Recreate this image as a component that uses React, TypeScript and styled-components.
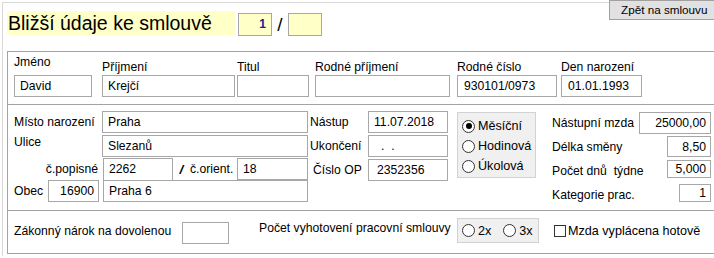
import React from 'react';
import styled, { createGlobalStyle, css } from 'styled-components';

const Global = createGlobalStyle`
  html, body { margin: 0; padding: 0; background: #fff; overflow: hidden; }
  body { font-family: "Liberation Sans", Arial, sans-serif; font-size: 12.2px; color: #000; }
`;

const Frame = styled.div`
  position: relative;
  box-sizing: border-box;
  margin: 2px 0 0 2px;
  height: 254px;
  border-top: 1px solid #d8d8d8;
  border-left: 1px solid #d8d8d8;
`;

const BackButton = styled.button`
  position: absolute;
  top: -3px;
  right: -1px;
  box-sizing: border-box;
  width: 106px;
  height: 20px;
  margin: 0;
  padding: 0 0 1px 11px;
  border: 1px solid #a0a0a0;
  background: #e1e1e1;
  font-family: "Liberation Sans", Arial, sans-serif;
  font-size: 11.7px;
  color: #000;
  text-align: left;
  cursor: pointer;
`;

const Header = styled.div`
  display: flex;
  align-items: flex-start;
  padding: 8px 0 0 4px;
`;

const Title = styled.div`
  box-sizing: border-box;
  width: 228px;
  height: 24px;
  line-height: 24px;
  padding-left: 1px;
  background: #ffffc8;
  font-size: 19.5px;
  white-space: nowrap;
`;

const NumBox = styled.div<{ $ml: number }>`
  box-sizing: border-box;
  margin: 2px 0 0 ${p => p.$ml}px;
  width: 34px;
  height: 23px;
  border: 1px solid #a7a7a7;
  background: #ffffc8;
  text-align: right;
  padding-right: 5px;
  line-height: 21px;
  font-size: 12px;
  font-weight: bold;
  color: #1a1a96;
`;

const HeaderSlash = styled.div`
  margin-top: 2px;
  width: 16px;
  height: 23px;
  line-height: 23px;
  text-align: center;
  font-size: 19px;
`;

const Sections = styled.div`
  margin: 15px 0 0 4px;
  width: 720px;
  border: 1px solid #a3a3a3;
  border-right: none;
`;

const Section = styled.div<{ $h: number }>`
  box-sizing: border-box;
  height: ${p => p.$h}px;
  display: flex;
  padding-left: 6px;
`;

const TopSection = styled(Section)`
  align-items: flex-end;
  padding-top: 3px;
  padding-bottom: 7px;
  border-bottom: 1px solid #a3a3a3;
`;

const MidSection = styled(Section)`
  align-items: flex-start;
  padding-top: 6px;
  border-bottom: 1px solid #a3a3a3;
`;

const BottomSection = styled(Section)`
  align-items: flex-start;
`;

const Field = styled.div<{ $w: number; $ml: number }>`
  display: flex;
  flex-direction: column;
  width: ${p => p.$w}px;
  margin-left: ${p => p.$ml}px;
  flex: none;
`;

const FieldLabel = styled.div<{ $mb?: number }>`
  line-height: 15px;
  margin-bottom: ${p => p.$mb ?? 0}px;
  white-space: nowrap;
`;

const Input = styled.input<{
  $w?: number;
  $h?: number;
  $align?: string;
  $pl?: number;
  $ml?: number;
  $mt?: number;
}>`
  box-sizing: border-box;
  width: ${p => (p.$w ? `${p.$w}px` : '100%')};
  height: ${p => p.$h ?? 22}px;
  flex: none;
  margin: ${p => p.$mt ?? 0}px 0 0 ${p => p.$ml ?? 0}px;
  padding: 0 4px 0 ${p => p.$pl ?? 5}px;
  border: 1px solid #a7a7a7;
  border-radius: 0;
  background: #fff;
  font-family: "Liberation Sans", Arial, sans-serif;
  font-size: 12.2px;
  color: #000;
  text-align: ${p => p.$align ?? 'left'};
  outline: none;
`;

const Column = styled.div<{ $w: number; $ml: number; $mt?: number }>`
  display: flex;
  flex-direction: column;
  flex: none;
  width: ${p => p.$w}px;
  margin-left: ${p => p.$ml}px;
  margin-top: ${p => p.$mt ?? 0}px;
`;

const Row = styled.div<{ $mt: number }>`
  display: flex;
  align-items: center;
  height: 22px;
  margin-top: ${p => p.$mt}px;
`;

const RowLabel = styled.div<{ $w?: number; $top?: boolean; $right?: boolean; $pl?: number }>`
  box-sizing: border-box;
  flex: ${p => (p.$w ? 'none' : '1')};
  width: ${p => (p.$w ? `${p.$w}px` : 'auto')};
  line-height: 15px;
  white-space: nowrap;
  padding-left: ${p => p.$pl ?? 0}px;
  ${p => p.$top && css`align-self: flex-start;`}
  ${p => p.$right && css`text-align: right; padding-right: 5px;`}
`;

const RightRow = styled(Row)`
  align-items: flex-start;
  & > ${RowLabel} { align-self: center; }
`;

const Sep = styled.div`
  flex: none;
  width: 17px;
  text-align: center;
  font-weight: bold;
  font-style: italic;
  font-size: 13.5px;
  line-height: 15px;
`;

const RadioPanel = styled.div<{ $w: number; $h: number; $mt: number; $ml: number; $row?: boolean }>`
  box-sizing: border-box;
  flex: none;
  display: flex;
  flex-direction: ${p => (p.$row ? 'row' : 'column')};
  align-items: ${p => (p.$row ? 'center' : 'stretch')};
  width: ${p => p.$w}px;
  height: ${p => p.$h}px;
  margin: ${p => p.$mt}px 0 0 ${p => p.$ml}px;
  padding: ${p => (p.$row ? '0 0 0 4px' : '3px 0 0 4px')};
  background: #f0f0f0;
  border: 1px solid #d2d2d2;
`;

const RadioItem = styled.label<{ $gap?: number }>`
  display: flex;
  align-items: center;
  gap: 3px;
  height: 20px;
  margin-right: ${p => p.$gap ?? 0}px;
  font-size: 12.6px;
  white-space: nowrap;
`;

const RadioCircle = styled.span<{ $on?: boolean }>`
  position: relative;
  box-sizing: border-box;
  flex: none;
  width: 13px;
  height: 13px;
  border: 1px solid #333;
  border-radius: 50%;
  background: #fff;
  ${p =>
    p.$on &&
    css`
      &::after {
        content: '';
        position: absolute;
        inset: 0;
        margin: auto;
        width: 6px;
        height: 6px;
        border-radius: 50%;
        background: #000;
      }
    `}
`;

const Text = styled.div<{ $w?: number; $mt: number; $ml?: number }>`
  flex: none;
  width: ${p => (p.$w ? `${p.$w}px` : 'auto')};
  margin: ${p => p.$mt}px 0 0 ${p => p.$ml ?? 0}px;
  line-height: 15px;
  white-space: nowrap;
`;

const CheckGroup = styled.label<{ $mt: number; $ml: number }>`
  display: flex;
  align-items: center;
  gap: 2px;
  height: 15px;
  margin: ${p => p.$mt}px 0 0 ${p => p.$ml}px;
  white-space: nowrap;
  font-size: 12.6px;
`;

const CheckBox = styled.span`
  box-sizing: border-box;
  flex: none;
  width: 12px;
  height: 12px;
  border: 1px solid #333;
  background: #fff;
`;

export default function App() {
  return (
    <>
      <Global />
      <Frame>
        <BackButton>Zpět na smlouvu</BackButton>
        <Header>
          <Title>Bližší údaje ke smlouvě</Title>
          <NumBox $ml={3}>1</NumBox>
          <HeaderSlash>/</HeaderSlash>
          <NumBox $ml={0} />
        </Header>
        <Sections>
          <TopSection $h={53}>
            <Field $w={78} $ml={0}>
              <FieldLabel $mb={5}>Jméno</FieldLabel>
              <Input readOnly defaultValue="David" />
            </Field>
            <Field $w={133} $ml={10}>
              <FieldLabel>Příjmení</FieldLabel>
              <Input readOnly defaultValue="Krejčí" />
            </Field>
            <Field $w={72} $ml={2}>
              <FieldLabel>Titul</FieldLabel>
              <Input readOnly defaultValue="" />
            </Field>
            <Field $w={135} $ml={6}>
              <FieldLabel>Rodné příjmení</FieldLabel>
              <Input readOnly defaultValue="" />
            </Field>
            <Field $w={100} $ml={7}>
              <FieldLabel>Rodné číslo</FieldLabel>
              <Input readOnly defaultValue="930101/0973" $pl={6} />
            </Field>
            <Field $w={81} $ml={4}>
              <FieldLabel>Den narození</FieldLabel>
              <Input readOnly defaultValue="01.01.1993" $pl={6} />
            </Field>
          </TopSection>

          <MidSection $h={106}>
            <Column $w={294} $ml={0}>
              <Row $mt={0}>
                <RowLabel $w={88}>Místo narození</RowLabel>
                <Input $w={206} readOnly defaultValue="Praha" />
              </Row>
              <Row $mt={2}>
                <RowLabel $w={88} $top>Ulice</RowLabel>
                <Input $w={206} readOnly defaultValue="Slezanů" />
              </Row>
              <Row $mt={1}>
                <RowLabel $w={89} $right>č.popisné</RowLabel>
                <Input $w={70} $h={23} readOnly defaultValue="2262" />
                <Sep>/</Sep>
                <RowLabel $w={47}>č.orient.</RowLabel>
                <Input $w={71} readOnly defaultValue="18" />
              </Row>
              <Row $mt={0}>
                <RowLabel $w={34}>Obec</RowLabel>
                <Input $w={51} readOnly defaultValue="16900" $align="right" />
                <Input $w={205} $ml={4} readOnly defaultValue="Praha 6" />
              </Row>
            </Column>

            <Column $w={138} $ml={2}>
              <Row $mt={0}>
                <RowLabel $w={58}>Nástup</RowLabel>
                <Input $w={80} readOnly defaultValue="11.07.2018" />
              </Row>
              <Row $mt={2}>
                <RowLabel $w={58}>Ukončení</RowLabel>
                <Input $w={80} readOnly defaultValue=".  ." $pl={12} />
              </Row>
              <Row $mt={2}>
                <RowLabel $w={58} $pl={3}>Číslo OP</RowLabel>
                <Input $w={80} readOnly defaultValue="2352356" $pl={8} />
              </Row>
            </Column>

            <RadioPanel $w={79} $h={66} $mt={1} $ml={9}>
              <RadioItem>
                <RadioCircle $on />
                Měsíční
              </RadioItem>
              <RadioItem>
                <RadioCircle />
                Hodinová
              </RadioItem>
              <RadioItem>
                <RadioCircle />
                Úkolová
              </RadioItem>
            </RadioPanel>

            <Column $w={159} $ml={16} $mt={1}>
              <RightRow $mt={0}>
                <RowLabel>Nástupní mzda</RowLabel>
                <Input $w={72} readOnly defaultValue="25000,00" $align="right" />
              </RightRow>
              <RightRow $mt={2}>
                <RowLabel>Délka směny</RowLabel>
                <Input $w={44} $h={21} readOnly defaultValue="8,50" $align="right" />
              </RightRow>
              <RightRow $mt={2}>
                <RowLabel>Počet dnů&nbsp; týdne</RowLabel>
                <Input $w={44} $h={18} readOnly defaultValue="5,000" $align="right" />
              </RightRow>
              <RightRow $mt={2}>
                <RowLabel>Kategorie prac.</RowLabel>
                <Input $w={32} $h={18} readOnly defaultValue="1" $align="right" />
              </RightRow>
            </Column>
          </MidSection>

          <BottomSection $h={42}>
            <Text $w={168} $mt={13}>Zákonný nárok na dovolenou</Text>
            <Input $w={47} $mt={11} readOnly defaultValue="" />
            <Text $w={198} $mt={10} $ml={30}>Počet vyhotovení pracovní smlouvy</Text>
            <RadioPanel $w={82} $h={25} $mt={7} $ml={0} $row>
              <RadioItem $gap={12}>
                <RadioCircle />
                2x
              </RadioItem>
              <RadioItem>
                <RadioCircle />
                3x
              </RadioItem>
            </RadioPanel>
            <CheckGroup $mt={12} $ml={15}>
              <CheckBox />
              Mzda vyplácena hotově
            </CheckGroup>
          </BottomSection>
        </Sections>
      </Frame>
    </>
  );
}
